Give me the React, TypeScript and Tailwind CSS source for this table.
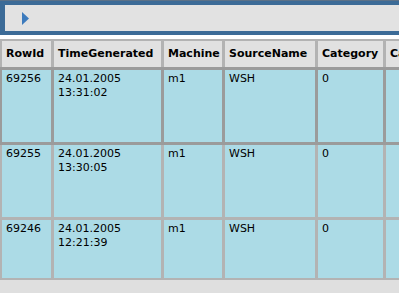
import React from 'react';

type LogRow = {
  rowId: number;
  date: string;
  time: string;
  machine: string;
  source: string;
  category: string;
};

const rows: LogRow[] = [
  { rowId: 69256, date: '24.01.2005', time: '13:31:02', machine: 'm1', source: 'WSH', category: '0' },
  { rowId: 69255, date: '24.01.2005', time: '13:30:05', machine: 'm1', source: 'WSH', category: '0' },
  { rowId: 69246, date: '24.01.2005', time: '12:21:39', machine: 'm1', source: 'WSH', category: '0' },
];

const headers = ['RowId', 'TimeGenerated', 'Machine', 'SourceName', 'Category', 'CategoryString'];

export default function App() {
  const selected = 0;

  return (
    <div className="w-[399px] h-[293px] overflow-hidden bg-[#dfdfdf] font-['DejaVu_Sans',Verdana,sans-serif] text-[11px] text-black">
      {/* Pager toolbar */}
      <div className="border-t border-[#5b7188]">
        <div className="h-[34px] border-y-[4px] border-l-[5px] border-[#3c6b97] bg-[#e2e2e2] flex items-center pl-[17px]">
          <svg width="7" height="13" viewBox="0 0 7 13">
            <polygon points="0,0 7,6.5 0,13" fill="#3d7bbd" />
          </svg>
        </div>
      </div>
      <div className="h-[4px] bg-white" />

      {/* Event log grid */}
      <div className="overflow-hidden bg-[#b3b3b3] pt-[2px] pl-[2px] pb-[2px]">
        <div className="grid grid-cols-[49px_107px_58px_90px_65px_60px] grid-rows-[26px_72px_72px_58px] gap-[3px]">
          {headers.map((h) => (
            <div key={h} className="bg-[#e1e1e1] font-bold flex items-center pl-[4px] whitespace-nowrap overflow-hidden">
              {h}
            </div>
          ))}
          {rows.map((r, i) => {
            const cell =
              'bg-[#acdbe6] pl-[4px] pt-[2px] leading-[14px] ' +
              (i === selected ? 'shadow-[0_0_0_3px_#9b9b9b]' : '');
            return (
              <React.Fragment key={r.rowId}>
                <div className={cell}>{r.rowId}</div>
                <div className={cell}>
                  {r.date}
                  <br />
                  {r.time}
                </div>
                <div className={cell}>{r.machine}</div>
                <div className={cell}>{r.source}</div>
                <div className={cell}>{r.category}</div>
                <div className={cell} />
              </React.Fragment>
            );
          })}
        </div>
      </div>
    </div>
  );
}
